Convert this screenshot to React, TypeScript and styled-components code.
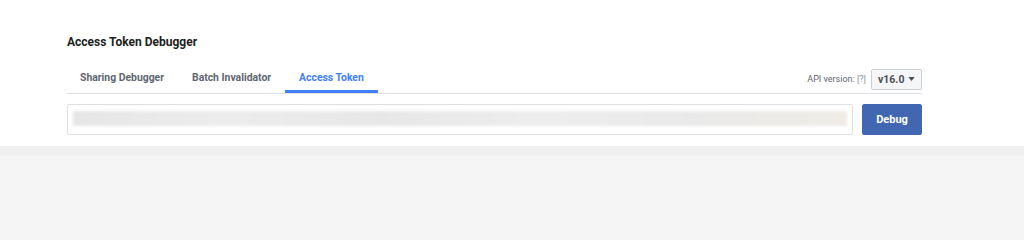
import React from 'react';
import styled, { createGlobalStyle } from 'styled-components';

const GlobalStyle = createGlobalStyle`
  html, body {
    margin: 0;
    padding: 0;
    background: #f5f5f5;
    font-family: Roboto, "Liberation Sans", Arial, sans-serif;
  }
`;

const tabs = ['Sharing Debugger', 'Batch Invalidator', 'Access Token'];

export default function App(): JSX.Element {
  return (
    <Page>
      <GlobalStyle />
      <Top>
        <Content>
          <Title>Access Token Debugger</Title>
          <TabBar>
            <Tabs>
              {tabs.map((t) => (
                <Tab key={t} $active={t === 'Access Token'}>
                  {t}
                </Tab>
              ))}
            </Tabs>
            <Version>
              <VersionLabel>
                API version: <Help>[?]</Help>
              </VersionLabel>
              <Select>
                v16.0
                <Caret viewBox="0 0 8 5">
                  <path d="M0 0h8L4 5z" fill="#4b4f56" />
                </Caret>
              </Select>
            </Version>
          </TabBar>
          <InputRow>
            <TokenInput>
              <BlurredToken />
            </TokenInput>
            <DebugButton>Debug</DebugButton>
          </InputRow>
        </Content>
      </Top>
      <Bottom />
    </Page>
  );
}

const Page = styled.div`
  display: flex;
  flex-direction: column;
  width: 1024px;
  min-height: 100vh;
`;

const Top = styled.div`
  height: 146px;
  background: #ffffff;
`;

const Content = styled.div`
  width: 855px;
  margin-left: 67px;
  padding-top: 34px;
`;

const Title = styled.div`
  font-size: 12px;
  line-height: 16px;
  font-weight: 700;
  color: #1c1e21;
`;

const TabBar = styled.div`
  display: flex;
  justify-content: space-between;
  align-items: center;
  margin-top: 13px;
  height: 30px;
  border-bottom: 1px solid #dddfe2;
`;

const Tabs = styled.div`
  display: flex;
  height: 100%;
  margin-left: -1px;
`;

const Tab = styled.div<{ $active: boolean }>`
  display: flex;
  align-items: center;
  padding: 2px 14px 0;
  box-sizing: border-box;
  height: 100%;
  border-bottom: 3px solid ${({ $active }) => ($active ? '#4080ff' : 'transparent')};
  font-size: 10.4px;
  font-weight: 700;
  color: ${({ $active }) => ($active ? '#4080ff' : '#606770')};
`;

const Version = styled.div`
  display: flex;
  align-items: center;
  gap: 5px;
  padding-top: 2px;
`;

const VersionLabel = styled.span`
  font-size: 9px;
  color: #606770;
`;

const Help = styled.span`
  color: #90949c;
`;

const Select = styled.div`
  display: flex;
  align-items: center;
  gap: 4px;
  box-sizing: border-box;
  height: 21px;
  width: 51px;
  padding: 0 0 0 6px;
  border: 1px solid #ccd0d5;
  border-radius: 2px;
  background: #f5f6f7;
  font-size: 10.5px;
  font-weight: 700;
  color: #4b4f56;
`;

const Caret = styled.svg`
  width: 7px;
  height: 4px;
`;

const InputRow = styled.div`
  display: flex;
  gap: 9px;
  margin-top: 10px;
  height: 31px;
`;

const TokenInput = styled.div`
  flex: 1;
  box-sizing: border-box;
  border: 1px solid #dddfe2;
  border-radius: 2px;
  padding: 6px 5px;
`;

const BlurredToken = styled.div`
  height: 15px;
  background: linear-gradient(90deg, #e6e6e6 0%, #ececec 20%, #e7e7e7 40%, #ededed 60%, #e9e9e9 80%, #efece6 100%);
  filter: blur(1.5px);
`;

const DebugButton = styled.button`
  width: 60px;
  border: 1px solid #4267b2;
  border-radius: 2px;
  background: #4267b2;
  color: #ffffff;
  font-family: inherit;
  font-size: 11px;
  font-weight: 700;
  padding: 0;
`;

const Bottom = styled.div`
  flex: 1;
  background: linear-gradient(180deg, #efefef 0px, #f0f0f0 9px, #f5f5f5 10px);
`;
